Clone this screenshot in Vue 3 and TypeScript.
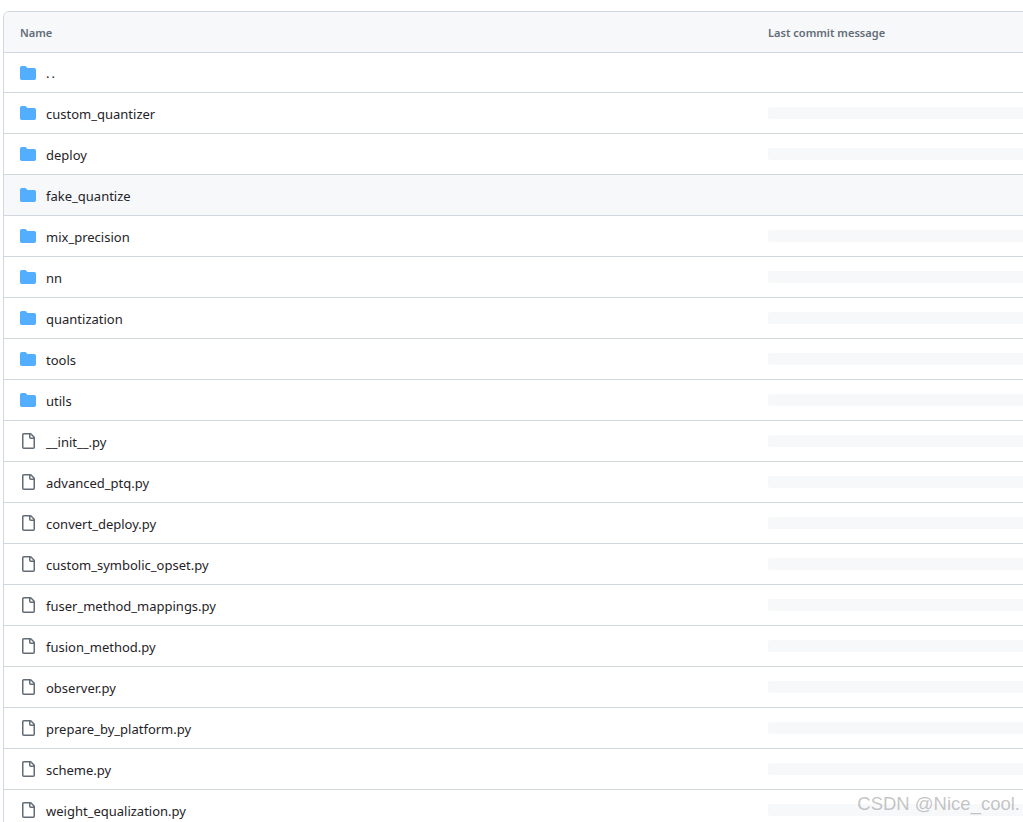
<script setup lang="ts">
interface Row { name: string; type: 'dir' | 'file'; skeleton: boolean; hover?: boolean }
const dirs = ['custom_quantizer', 'deploy', 'fake_quantize', 'mix_precision', 'nn', 'quantization', 'tools', 'utils']
const files = ['__init__.py', 'advanced_ptq.py', 'convert_deploy.py', 'custom_symbolic_opset.py', 'fuser_method_mappings.py', 'fusion_method.py', 'observer.py', 'prepare_by_platform.py', 'scheme.py', 'weight_equalization.py']
const rows: Row[] = [
  { name: '..', type: 'dir', skeleton: false },
  ...dirs.map((name): Row => ({ name, type: 'dir', skeleton: name !== 'fake_quantize', hover: name === 'fake_quantize' })),
  ...files.map((name): Row => ({ name, type: 'file', skeleton: true })),
]
const dirPath = 'M1.75 1A1.75 1.75 0 0 0 0 2.75v10.5C0 14.216.784 15 1.75 15h12.5A1.75 1.75 0 0 0 16 13.25v-8.5A1.75 1.75 0 0 0 14.25 3H7.5a.25.25 0 0 1-.2-.1l-.9-1.2C6.07 1.26 5.55 1 5 1H1.75Z'
const filePath = 'M2 1.75C2 .784 2.784 0 3.75 0h6.586c.464 0 .909.184 1.237.513l2.914 2.914c.329.328.513.773.513 1.237v9.586A1.75 1.75 0 0 1 13.25 16h-9.5A1.75 1.75 0 0 1 2 14.25Zm1.75-.25a.25.25 0 0 0-.25.25v12.5c0 .138.112.25.25.25h9.5a.25.25 0 0 0 .25-.25V6h-2.75A1.75 1.75 0 0 1 9 4.25V1.5Zm6.75.062V4.25c0 .138.112.25.25.25h2.688l-.011-.013-2.914-2.914-.013-.011Z'
</script>

<template>
  <div class="page">
    <div class="table">
      <div class="row head">
        <div class="name-col">Name</div>
        <div class="msg-col">Last commit message</div>
      </div>
      <div v-for="(row, i) in rows" :key="row.name" class="row" :class="{ hover: row.hover, parent: i === 0 }">
        <div class="name-col cell">
          <svg class="icon" :class="row.type" viewBox="0 0 16 16" width="16" height="16" aria-hidden="true">
            <path :d="row.type === 'dir' ? dirPath : filePath" />
          </svg>
          <span class="label">{{ row.name }}</span>
        </div>
        <div class="msg-col"><div v-if="row.skeleton" class="skeleton"></div></div>
      </div>
    </div>
    <div class="watermark">CSDN @Nice_cool.</div>
  </div>
</template>

<style scoped>
.page {
  position: relative;
  width: 1023px;
  height: 822px;
  overflow: hidden;
  background: #fff;
  padding: 11px 0 0 3px;
  box-sizing: border-box;
  font-family: "Noto Sans", "Open Sans", sans-serif;
  color: #1f2328;
}
.table {
  width: 1100px;
  border: 1px solid #d0d7de;
  border-radius: 6px 0 0 0;
  overflow: hidden;
}
.row {
  display: flex;
  align-items: center;
  height: 40px;
  border-top: 1px solid #d0d7de;
  font-size: 13px;
}
.row.parent {
  height: 39px;
}
.label {
  padding-top: 2px;
}
.row.parent .label {
  letter-spacing: 2px;
  padding-top: 1px;
}
.row.head {
  border-top: 0;
  background: #f6f8fa;
  color: #636c76;
  font-size: 11.05px;
  font-weight: 600;
}
.row.hover {
  background: #f6f8fa;
}
.name-col {
  width: 748px;
  padding-left: 16px;
  flex: none;
}
.cell {
  display: flex;
  align-items: center;
  gap: 10px;
}
.msg-col {
  flex: 1;
}
.icon {
  flex: none;
}
.icon.dir {
  fill: #54aeff;
}
.icon.file {
  fill: #636c76;
}
.skeleton {
  height: 12px;
  background: #f6f8fa;
  border-radius: 3px;
}
.watermark {
  position: absolute;
  right: 3px;
  bottom: 7px;
  font-family: "Liberation Sans", sans-serif;
  font-size: 18.5px;
  color: rgba(140, 140, 140, 0.5);
}
</style>
